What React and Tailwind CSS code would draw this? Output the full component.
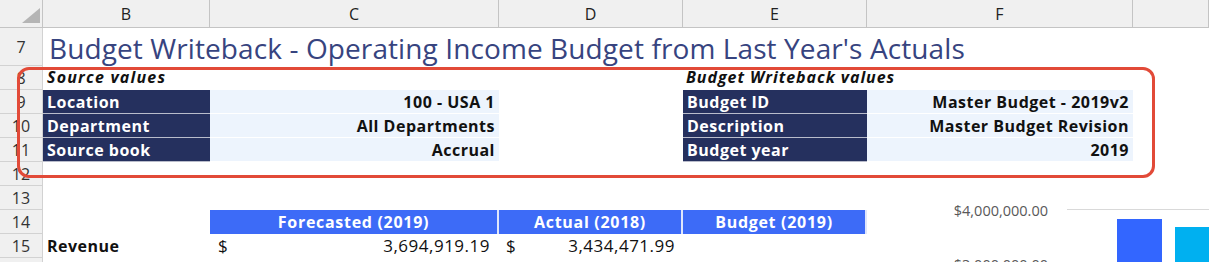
import React from "react";

const cols = ["B", "C", "D", "E", "F", ""];

// one row header cell
function RowHead({ n }) {
  return (
    <div className="flex items-center justify-center bg-[#f0f0f0] border-r border-b border-[#d2d2d2] text-[16px] text-[#333]">
      {n}
    </div>
  );
}

function Label({ children }) {
  return (
    <div className="flex items-center bg-[#25305e] border-b border-[#b9bccb] px-[4px] text-[16px] font-bold tracking-[0.5px] text-white whitespace-nowrap">
      {children}
    </div>
  );
}

function Value({ children }) {
  return (
    <div className="flex items-center justify-end bg-[#edf4fd] border-b border-white px-[4px] text-[16px] font-bold tracking-[0.5px] text-[#111] whitespace-nowrap">
      {children}
    </div>
  );
}

function Head({ children }) {
  return (
    <div className="flex items-center justify-center bg-[#3d6bf7] border-r-2 border-[#dfe6fb] text-[16px] font-bold tracking-[0.7px] text-white whitespace-nowrap">
      {children}
    </div>
  );
}

const Empty = () => <div />;

export default function App() {
  return (
    <div className="relative w-[1209px] h-[262px] overflow-hidden bg-white font-['Open_Sans',sans-serif]">
      <div className="grid grid-cols-[43px_167px_289px_184px_184px_266px_1fr] grid-rows-[28px_38px_repeat(9,24px)]">
        {/* column headers */}
        <div className="relative bg-[#f0f0f0] border-r border-b border-[#c4c4c4]">
          <svg className="absolute left-[22px] top-[8px]" width="18" height="15" viewBox="0 0 18 15">
            <polygon points="18,0 18,15 0,15" fill="#b5b5b5" />
          </svg>
        </div>
        {cols.map((c, i) => (
          <div
            key={i}
            className="flex items-center justify-center bg-[#f0f0f0] border-r border-b border-[#c4c4c4] text-[16px] text-[#222]"
          >
            {c}
          </div>
        ))}

        {/* row 7 */}
        <RowHead n="7" />
        <div className="col-span-6 flex items-center pl-[6px] pt-[2px] text-[28px] text-[#37447f] tracking-[0.1px] whitespace-nowrap">
          Budget Writeback - Operating Income Budget from Last Year's Actuals
        </div>

        {/* row 8 */}
        <RowHead n="8" />
        <div className="flex items-end pl-[4px] pb-[1px] text-[16px] font-bold italic tracking-[1.2px] text-[#111] whitespace-nowrap">
          Source values
        </div>
        <Empty />
        <Empty />
        <div className="flex items-end pl-[3px] pb-[1px] text-[16px] font-bold italic tracking-[0.95px] text-[#111] whitespace-nowrap">
          Budget Writeback values
        </div>
        <Empty />
        <Empty />

        {/* rows 9-11 */}
        <RowHead n="9" />
        <Label>Location</Label>
        <Value>100 - USA 1</Value>
        <Empty />
        <Label>Budget ID</Label>
        <Value>Master Budget - 2019v2</Value>
        <Empty />

        <RowHead n="10" />
        <Label>Department</Label>
        <Value>All Departments</Value>
        <Empty />
        <Label>Description</Label>
        <Value>Master Budget Revision</Value>
        <Empty />

        <RowHead n="11" />
        <Label>Source book</Label>
        <Value>Accrual</Value>
        <Empty />
        <Label>Budget year</Label>
        <Value>2019</Value>
        <Empty />

        {/* rows 12-13 */}
        <RowHead n="12" />
        <div className="col-span-6" />
        <RowHead n="13" />
        <div className="col-span-6" />

        {/* row 14 */}
        <RowHead n="14" />
        <Empty />
        <Head>Forecasted (2019)</Head>
        <Head>Actual (2018)</Head>
        <Head>Budget (2019)</Head>
        <Empty />
        <Empty />

        {/* row 15 */}
        <RowHead n="15" />
        <div className="flex items-center pl-[4px] text-[16px] font-bold tracking-[0.5px] text-[#111]">Revenue</div>
        <div className="flex items-center justify-between pl-[8px] pr-[9px] text-[17px] tracking-[0.5px] text-[#111]">
          <span>$</span>
          <span>3,694,919.19</span>
        </div>
        <div className="flex items-center justify-between pl-[7px] pr-[8px] text-[17px] tracking-[0.5px] text-[#111]">
          <span>$</span>
          <span>3,434,471.99</span>
        </div>
        <Empty />
        <Empty />
        <Empty />

        {/* row 16 */}
        <RowHead n="16" />
        <Empty />
        <div className="flex items-center pl-[8px] text-[17px] text-[#111]">$</div>
        <div className="flex items-center pl-[7px] text-[17px] text-[#111]">$</div>
        <Empty />
        <Empty />
        <Empty />
      </div>

      {/* chart object */}
      <div className="absolute left-[930px] top-[196px] w-[279px] h-[80px] bg-white">
        <div className="absolute right-[161px] top-[4px] text-[14.5px] text-[#595959]">$4,000,000.00</div>
        <div className="absolute right-[161px] top-[58px] text-[14.5px] text-[#595959]">$3,000,000.00</div>
        <div className="absolute left-[137px] top-[13px] w-[142px] h-px bg-[#d9d9d9]" />
        <div className="absolute left-[187px] top-[23px] w-[45px] h-[60px] bg-[#3366ff]" />
        <div className="absolute left-[245px] top-[31px] w-[40px] h-[60px] bg-[#00b0f0]" />
      </div>

      {/* highlight frame */}
      <div className="absolute left-[17px] top-[67px] w-[1138px] h-[111px] rounded-[12px] border-[3px] border-[#e24a38]" />
    </div>
  );
}
